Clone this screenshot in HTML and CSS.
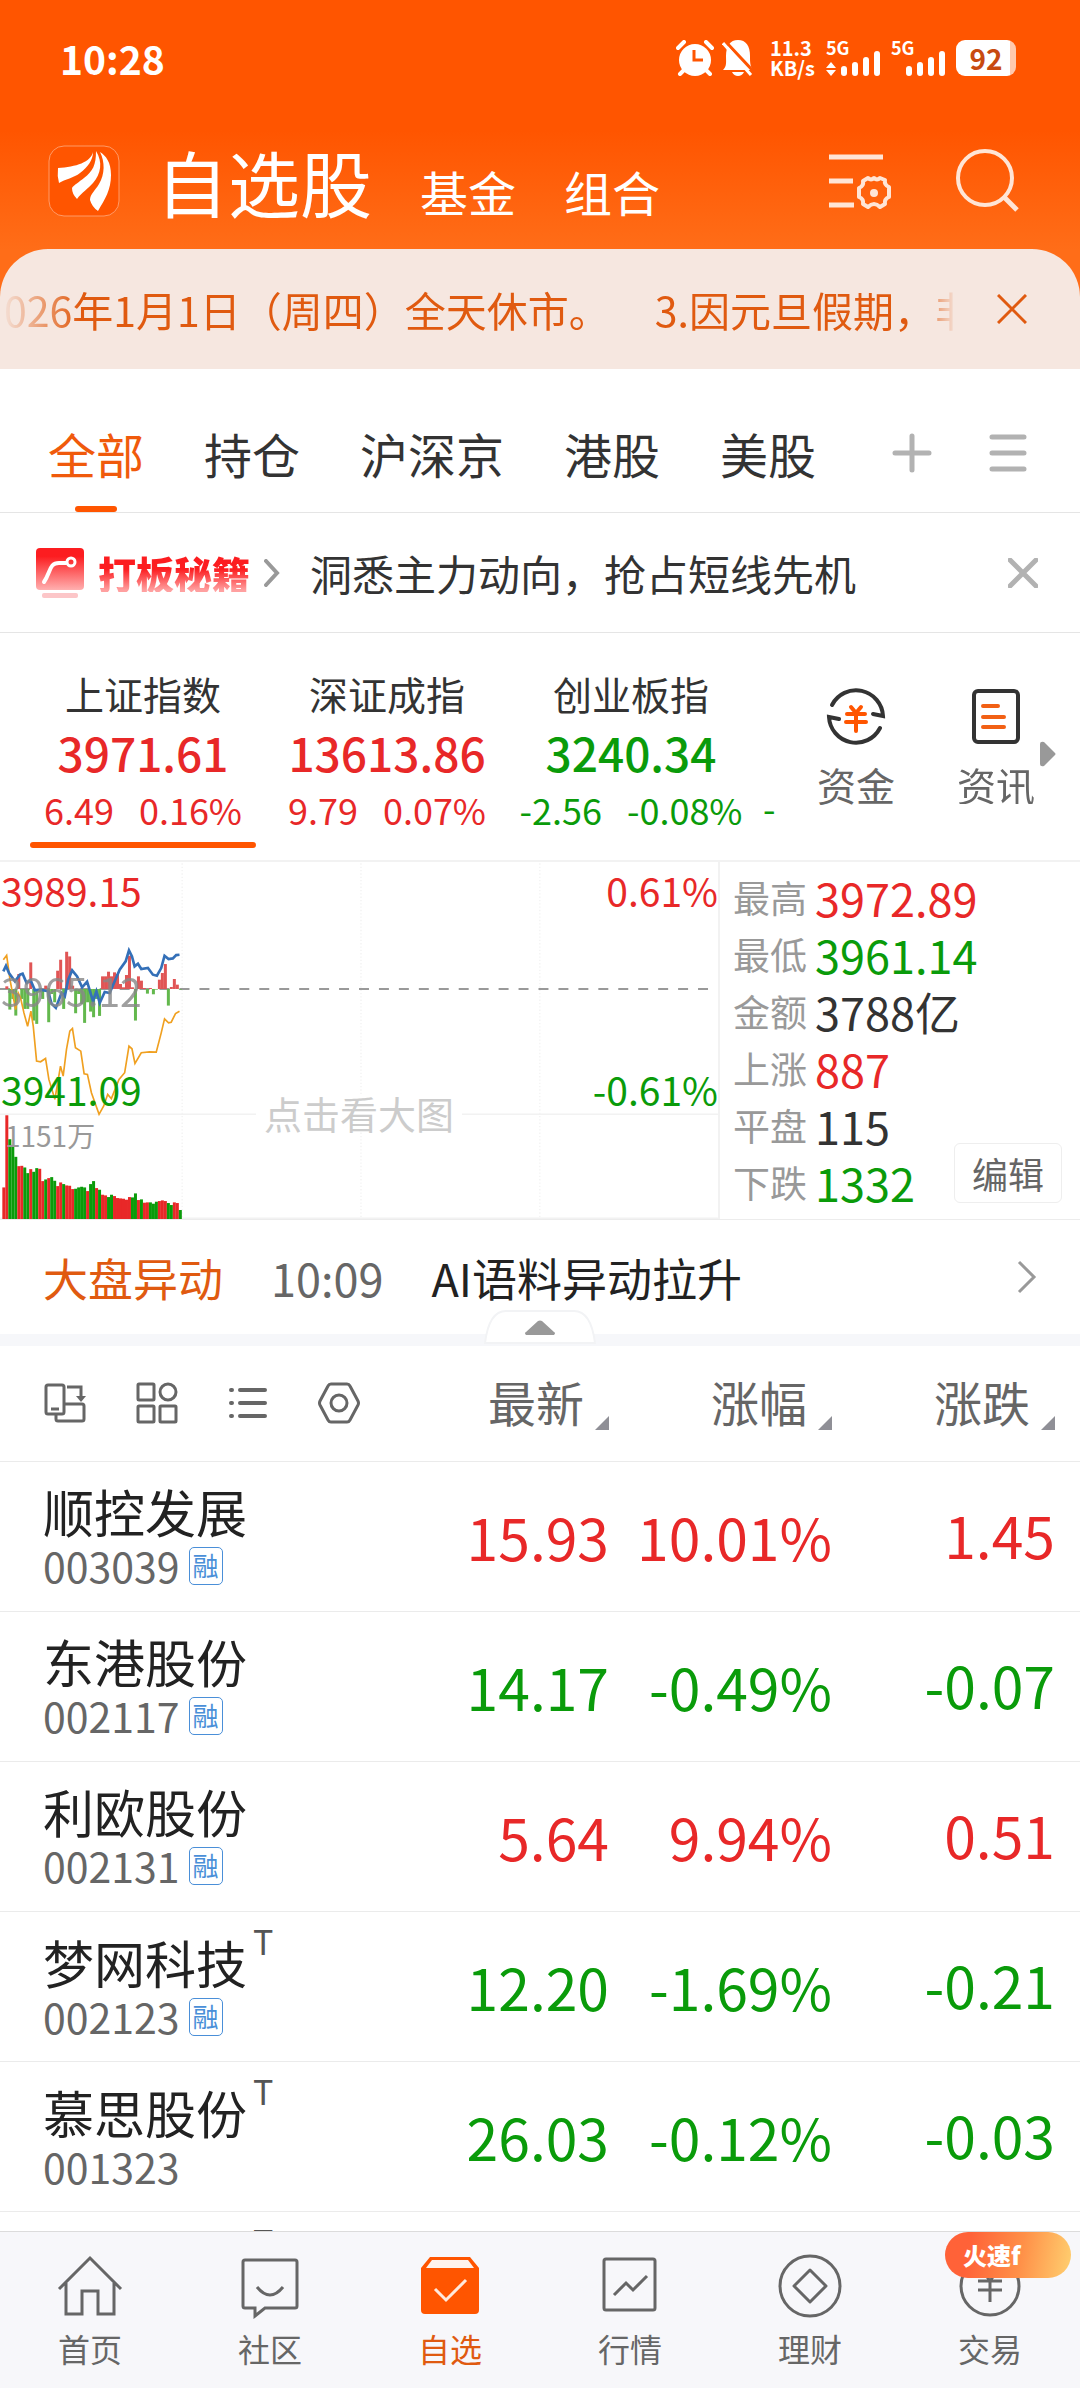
FILE: index.html
```html
<!doctype html>
<html lang="zh-CN">
  <head>
    <meta charset="UTF-8" />
    <meta name="viewport" content="width=device-width, initial-scale=1.0" />
    <title>自选股</title>
    <link rel="stylesheet" href="styles.css">
  </head>
  <body>
    <header class="app-header">
      <div class="status-bar">
        <span class="clock">10:28</span>
        <div class="status-icons">
          <svg class="alarm" width="38" height="36" viewBox="0 0 38 36">
            <circle cx="19" cy="20" r="16" fill="#fff" />
            <path d="M2 8L8 2M36 8L30 2M4 34l5-5M34 34l-5-5" stroke="#fff" stroke-width="4" stroke-linecap="round" />
            <path d="M18 10v10h9" fill="none" stroke="#f50" stroke-width="3" />
          </svg>
          <svg class="bell" width="32" height="36" viewBox="0 0 32 36">
            <path d="M1 30C5 26 4 22 4 16C4 6 8 0 16 0S28 6 28 16C28 22 28 26 31 30Z" fill="#fff" />
            <path d="M10 32h12Q20 36 16 36T10 32Z" fill="#fff" />
            <path d="M3 1L32 32" stroke="#f50" stroke-width="3" />
            <path d="M1 3L29 35" stroke="#fff" stroke-width="3" />
          </svg>
          <div class="net-speed"><span>11.3</span><span>KB/s</span></div>
          <div class="signal">
            <span>5G</span>
            <svg width="56" height="26" viewBox="0 0 56 26">
              <path d="M0 18l5-6 5 6zM0 20l5 6 5-6z" fill="#fff" />
              <path d="M18 19v4M29 15v8M40 10v13M51 4v19" stroke="#fff" stroke-width="6" stroke-linecap="round" />
            </svg>
          </div>
          <div class="signal">
            <span>5G</span>
            <svg width="56" height="26" viewBox="0 0 56 26">
              <path d="M18 19v4M29 15v8M40 10v13M51 4v19" stroke="#fff" stroke-width="6" stroke-linecap="round" />
            </svg>
          </div>
          <span class="battery">92</span>
        </div>
      </div>
      <div class="title-bar">
        <svg class="logo" width="72" height="72" viewBox="0 0 72 72">
          <rect x="1" y="1" width="70" height="70" rx="15" fill="#f50" stroke="#ff9a66" />
          <path fill="#fff" d="M45 7C43 17 28 22 10 23Q9 31 11 38C17 34 26 33 32 28C40 22 45 15 45 7ZM48 6C48 20 45 26 36 33C31 37 26 40 24 43Q24 49 29 54C34 47 40 44 45 38C53 29 55 17 48 6ZM52 7C57 17 57 29 51 39C47 46 42 49 42 55Q44 62 50 66C57 54 63 45 63 30C63 17 58 11 52 7Z" />
        </svg>
        <nav class="title-nav">
          <a class="current" href="#">自选股</a>
          <a href="#">基金</a>
          <a href="#">组合</a>
        </nav>
        <button class="icon-button" aria-label="设置">
          <svg width="64" height="62" viewBox="0 0 64 62">
            <g fill="none" stroke="#ffe5d6" stroke-width="5">
              <path d="M0 7h54M0 31h24M0 55h25" />
              <path stroke-width="4" stroke-linejoin="round" d="M45 29Q48 32 51 29L56 31Q55 36 60 38V48Q55 50 56 55L51 58Q48 55 45 55Q42 55 39 58L34 55Q35 50 30 48V39Q35 37 34 32L39 29Q42 32 45 29Z" transform="translate(0 -1)" />
            </g>
            <circle cx="45" cy="43" r="4" fill="#ffe5d6" />
          </svg>
        </button>
        <button class="icon-button" aria-label="搜索">
          <svg width="64" height="64" viewBox="0 0 64 64">
            <g fill="none" stroke="#ffe5d6" stroke-width="4">
              <circle cx="29" cy="29" r="27" />
              <path d="M48 48L61 61" stroke-width="5" />
            </g>
          </svg>
        </button>
      </div>
    </header>

    <section class="notice">
      <div class="notice-text"><span>026年1月1日（周四）全天休市。</span><span>3.因元旦假期，非</span></div>
      <button class="icon-button" aria-label="关闭公告">
        <svg width="30" height="30" viewBox="0 0 30 30">
          <path d="M1 1L29 29M29 1L1 29" stroke="#e05a10" stroke-width="3" />
        </svg>
      </button>
    </section>

    <nav class="tabs">
      <a class="active" href="#">全部</a>
      <a href="#">持仓</a>
      <a href="#">沪深京</a>
      <a href="#">港股</a>
      <a href="#">美股</a>
      <div class="tab-actions">
        <button class="icon-button" aria-label="添加">
          <svg width="40" height="40" viewBox="0 0 40 40">
            <path d="M3 20h34M20 3v34" stroke="#b2b2b2" stroke-width="5" stroke-linecap="round" />
          </svg>
        </button>
        <button class="icon-button" aria-label="分组">
          <svg width="40" height="40" viewBox="0 0 40 40">
            <path d="M4 4h32M4 20h32M4 36h32" stroke="#b2b2b2" stroke-width="5" stroke-linecap="round" />
          </svg>
        </button>
      </div>
    </nav>

    <section class="promo">
      <svg width="48" height="50" viewBox="0 0 48 50">
        <defs>
          <linearGradient id="promoFill" x2="0" y2="1">
            <stop offset="0.2" stop-color="#fc1d20" />
            <stop offset="1" stop-color="#ffb0b0" />
          </linearGradient>
        </defs>
        <rect width="48" height="42" rx="4" fill="url(#promoFill)" />
        <rect x="6" y="45" width="36" height="5" rx="2" fill="#fcc6c8" />
        <path d="M8 34C15 24 13 15 23 15H30" fill="none" stroke="#fff" stroke-width="4" stroke-linecap="round" />
        <circle cx="35" cy="14" r="4" fill="none" stroke="#fff" stroke-width="3" />
      </svg>
      <strong>打板秘籍</strong>
      <svg width="16" height="28" viewBox="0 0 16 28">
        <path d="M2 2l11 12L2 26" fill="none" stroke="#999" stroke-width="4" stroke-linecap="round" />
      </svg>
      <a href="#">洞悉主力动向，抢占短线先机</a>
      <button class="icon-button" aria-label="关闭">
        <svg width="30" height="30" viewBox="0 0 30 30">
          <path d="M2 2L28 28M28 2L2 28" stroke="#b2b2b2" stroke-width="5" stroke-linecap="round" />
        </svg>
      </button>
    </section>

    <section class="indices">
      <div class="index-list">
        <div class="index-item up selected">
          <span class="index-name">上证指数</span>
          <span class="index-value">3971.61</span>
          <span class="index-change"><span>6.49</span><span>0.16%</span></span>
        </div>
        <div class="index-item up">
          <span class="index-name">深证成指</span>
          <span class="index-value">13613.86</span>
          <span class="index-change"><span>9.79</span><span>0.07%</span></span>
        </div>
        <div class="index-item down">
          <span class="index-name">创业板指</span>
          <span class="index-value">3240.34</span>
          <span class="index-change"><span>-2.56</span><span>-0.08%</span></span>
        </div>
        <div class="index-item down next">
          <span class="index-change">-</span>
        </div>
      </div>
      <div class="index-tools">
        <a href="#">
          <svg width="60" height="60" viewBox="0 0 60 60">
            <g fill="none" stroke="#333" stroke-width="4" stroke-linecap="round">
              <path d="M6 19A27 27 0 0 1 57 30L47 28" />
              <path d="M54 42A27 27 0 0 1 3 31L13 33" />
            </g>
            <path d="M25 21l5 6 5-6M21 28h18M20 36h20M30 27v18" fill="none" stroke="#f50" stroke-width="4" stroke-linecap="round" />
          </svg>
          资金
        </a>
        <a href="#">
          <svg width="60" height="60" viewBox="0 0 60 60">
            <rect x="8" y="5" width="44" height="51" rx="4" fill="none" stroke="#333" stroke-width="4" />
            <path d="M17 20h15M17 31h21M17 41h21" stroke="#f26014" stroke-width="4" stroke-linecap="round" />
          </svg>
          资讯
        </a>
      </div>
      <svg class="more-arrow" width="16" height="26" viewBox="0 0 16 26">
        <path d="M0 3Q0 0 4 1L15 12Q16 13 15 14L4 25Q0 26 0 23Z" fill="#999" />
      </svg>
    </section>

    <section class="market">
      <div class="chart">
        <svg id="chartPlot" viewBox="0 6 2160 1074">
          <g stroke="#f2f2f2" stroke-width="4">
            <path d="M548 10V1080M1086 10V1080M1624 10V1080" stroke-dasharray="4 6" />
            <path d="M0 765H2160M0 1078H2160" stroke-width="5" />
          </g>
          <path d="M0 388H2140" stroke="#999" stroke-width="6" stroke-dasharray="30 30" />
          <g id="bars"></g>
          <polyline fill="none" stroke="#f0a020" stroke-width="5" points="10,300 20,287 30,360 47,450 55,400 62,415 72,460 83,500 93,455 100,500 110,605 122,607 137,597 147,660 165,720 182,620 190,650 200,570 210,515 218,507 227,565 243,575 253,643 263,645 275,700 298,765 312,740 324,705 335,718 358,660 375,640 388,560 397,568 406,612 425,580 450,577 470,578 485,520 495,478 507,490 515,488 528,462 540,455" />
          <polyline fill="none" stroke="#3470b8" stroke-width="8" points="10,335 18,318 27,340 45,365 60,345 68,342 80,370 92,362 105,392 120,390 145,395 155,432 168,445 185,400 195,410 205,360 217,332 232,350 247,383 262,366 280,425 290,395 300,430 315,397 330,400 345,365 360,330 378,305 388,272 397,290 405,320 415,312 425,328 445,325 460,345 472,348 485,325 495,288 507,298 520,296 530,286 540,285" />
        </svg>
        <span class="chart-label high up">3989.15</span>
        <span class="chart-label high right up">0.61%</span>
        <span class="chart-label middle">3965.12</span>
        <span class="chart-label low down">3941.09</span>
        <span class="chart-label low right down">-0.61%</span>
        <span class="chart-label volume">1151万</span>
        <span class="chart-hint">点击看大图</span>
      </div>
      <div class="market-stats">
        <dl>
          <div><dt>最高</dt><dd class="up">3972.89</dd></div>
          <div><dt>最低</dt><dd class="down">3961.14</dd></div>
          <div><dt>金额</dt><dd>3788亿</dd></div>
          <div><dt>上涨</dt><dd class="up">887</dd></div>
          <div><dt>平盘</dt><dd>115</dd></div>
          <div><dt>下跌</dt><dd class="down">1332</dd></div>
        </dl>
        <button class="edit-button">编辑</button>
      </div>
    </section>

    <section class="movement">
      <strong>大盘异动</strong>
      <time>10:09</time>
      <a href="#">AI语料异动拉升</a>
      <svg width="20" height="34" viewBox="0 0 20 34">
        <path d="M2 2l15 15L2 32" fill="none" stroke="#999" stroke-width="3" />
      </svg>
      <button class="collapse" aria-label="收起">
        <svg width="112" height="34" viewBox="0 0 112 34">
          <path d="M1 33Q5 1 22 1H90Q107 1 111 33Z" fill="#fff" stroke="#f2f3f5" stroke-width="2" />
          <path d="M42 25Q40 23 42 22L54 11Q56 10 58 11L70 22Q72 23 70 25Z" fill="#999" />
        </svg>
      </button>
    </section>

    <main class="stock-list">
      <table>
        <thead>
          <tr>
            <th>
              <div class="view-tools">
                <button class="icon-button" aria-label="横屏">
                  <svg width="44" height="42" viewBox="0 0 44 42">
                    <g fill="none" stroke="#666" stroke-width="3">
                      <rect x="3" y="3" width="18" height="29" rx="2" />
                      <path d="M13 33V37Q13 39 15 39H39Q41 39 41 37V24Q41 22 39 22H21M8 27h8M24 5H38V15" />
                    </g>
                    <path d="M33 14h10l-5 6z" fill="#666" />
                  </svg>
                </button>
                <button class="icon-button" aria-label="宫格">
                  <svg width="42" height="42" viewBox="0 0 42 42">
                    <g fill="none" stroke="#666" stroke-width="3">
                      <rect x="2" y="2" width="16" height="16" rx="1" />
                      <circle cx="32" cy="10" r="8" />
                      <rect x="2" y="24" width="16" height="16" rx="1" />
                      <rect x="24" y="24" width="16" height="16" rx="1" />
                    </g>
                  </svg>
                </button>
                <button class="icon-button" aria-label="列表">
                  <svg width="42" height="42" viewBox="0 0 42 42">
                    <path d="M4 8h1M4 21h1M4 34h1M13 8h25M13 21h25M13 34h25" stroke="#666" stroke-width="4" stroke-linecap="round" />
                  </svg>
                </button>
                <button class="icon-button" aria-label="列表设置">
                  <svg width="42" height="42" viewBox="0 0 42 42">
                    <g fill="none" stroke="#666" stroke-width="3">
                      <path d="M13 2H29Q31 2 32 4L40 19Q41 21 40 23L32 38Q31 40 29 40H13Q11 40 10 38L2 23Q1 21 2 19L10 4Q11 2 13 2Z" />
                      <circle cx="21" cy="21" r="8" />
                    </g>
                  </svg>
                </button>
              </div>
            </th>
            <th class="col-price"><button class="sort">最新</button></th>
            <th class="col-rate"><button class="sort">涨幅</button></th>
            <th class="col-change"><button class="sort">涨跌</button></th>
          </tr>
        </thead>
        <tbody>
          <tr class="up">
            <td><div class="stock-name">顺控发展</div><div class="stock-code">003039<span class="margin-tag">融</span></div></td>
            <td>15.93</td>
            <td>10.01%</td>
            <td>1.45</td>
          </tr>
          <tr class="down">
            <td><div class="stock-name">东港股份</div><div class="stock-code">002117<span class="margin-tag">融</span></div></td>
            <td>14.17</td>
            <td>-0.49%</td>
            <td>-0.07</td>
          </tr>
          <tr class="up">
            <td><div class="stock-name">利欧股份</div><div class="stock-code">002131<span class="margin-tag">融</span></div></td>
            <td>5.64</td>
            <td>9.94%</td>
            <td>0.51</td>
          </tr>
          <tr class="down">
            <td><div class="stock-name">梦网科技<sup>T</sup></div><div class="stock-code">002123<span class="margin-tag">融</span></div></td>
            <td>12.20</td>
            <td>-1.69%</td>
            <td>-0.21</td>
          </tr>
          <tr class="down">
            <td><div class="stock-name">慕思股份<sup>T</sup></div><div class="stock-code">001323</div></td>
            <td>26.03</td>
            <td>-0.12%</td>
            <td>-0.03</td>
          </tr>
          <tr>
            <td><div class="stock-name">　　　　<sup>T</sup></div><div class="stock-code">&nbsp;</div></td>
            <td></td>
            <td></td>
            <td></td>
          </tr>
        </tbody>
      </table>
    </main>

    <nav class="bottom-nav">
      <a href="#">
        <svg width="66" height="66" viewBox="0 0 66 66">
          <path d="M2 36L33 5L64 36M9 30V61H25V38H41V61H57V30" fill="none" stroke="#666" stroke-width="3" />
        </svg>
        首页
      </a>
      <a href="#">
        <svg width="66" height="66" viewBox="0 0 66 66">
          <path d="M8 7H58Q60 7 60 9V53Q60 55 58 55H28L18 63V55H8Q6 55 6 53V9Q6 7 8 7Z" fill="none" stroke="#666" stroke-width="3" />
          <path d="M20 34Q33 50 46 34" fill="none" stroke="#666" stroke-width="3" />
        </svg>
        社区
      </a>
      <a class="active" href="#">
        <svg width="66" height="66" viewBox="0 0 66 66">
          <path d="M4 15L13 4H53L62 15V57Q62 61 58 61H8Q4 61 4 57Z" fill="#f50" />
          <path d="M15 7H51L57 15H9Z" fill="#fff3ec" />
          <path d="M18 36L29 47L49 27" fill="none" stroke="#ffe9dc" stroke-width="3" />
        </svg>
        自选
      </a>
      <a href="#">
        <svg width="66" height="66" viewBox="0 0 66 66">
          <rect x="7" y="6" width="51" height="51" rx="2" fill="none" stroke="#666" stroke-width="3" />
          <path d="M17 42L29 30L36 37L50 23" fill="none" stroke="#666" stroke-width="3" />
        </svg>
        行情
      </a>
      <a href="#">
        <svg width="66" height="66" viewBox="0 0 66 66">
          <g fill="none" stroke="#666" stroke-width="3" stroke-linejoin="round">
            <circle cx="33" cy="33" r="30" />
            <path d="M33 17L49 33L33 49L17 33Z" />
          </g>
        </svg>
        理财
      </a>
      <a href="#">
        <svg width="66" height="66" viewBox="0 0 66 66">
          <g fill="none" stroke="#666" stroke-width="3">
            <circle cx="33" cy="33" r="29" />
            <path d="M23 14L33 28L43 14M21 28H45M21 37H45M33 28V49" />
          </g>
        </svg>
        交易
        <span class="nav-badge">火速f</span>
      </a>
    </nav>

    <script>
      const volumes = [95, 312, 240, 223, 187, 159, 160, 155, 138, 150, 142, 153, 151, 114, 119, 123, 126, 115, 99, 110, 105, 101, 100, 90, 91, 95, 97, 95, 84, 105, 114, 93, 88, 73, 71, 66, 73, 69, 63, 62, 61, 58, 66, 65, 77, 57, 59, 49, 50, 50, 46, 52, 54, 56, 54, 48, 42, 50, 48, 27];
      const volumeColors = "RRGGGRRGGRGGRRGRGGRRGRRRGGGGRGGRGRRGGRRRRRRGGRGRRGGGRRRGGRRG";
      const momentum = [0, 8, -62, -30, -80, 45, -30, -60, -60, 80, -95, -105, -10, -30, 10, -100, -15, -40, 55, 88, -60, 112, 98, 10, -73, -15, -45, -102, -40, -68, -85, -30, -81, 38, 38, 52, 38, 50, 45, 15, 5, 42, 100, 5, -95, 38, 25, 3, -14, 3, -16, -2, 28, 48, 75, -50, 6, 30, 13, -2];

      let html = "";
      momentum.forEach((value, i) => {
        const y = value > 0 ? 388 - value : 388;
        const fill = value > 0 ? "#e05555" : "#63b84d";
        html += `<rect x="${7 + i * 9}" y="${y}" width="9" height="${Math.abs(value)}" fill="${fill}" />`;
      });
      volumes.forEach((value, i) => {
        const fill = volumeColors[i] === "R" ? "#e82828" : "#0a9b0a";
        html += `<rect x="${7 + i * 9}" y="${1080 - value}" width="9" height="${value}" fill="${fill}" />`;
      });
      document.getElementById("bars").innerHTML = html;
    </script>
  </body>
</html>
```

FILE: styles.css
```css
* {
  box-sizing: border-box;
}

body {
  display: flex;
  flex-direction: column;
  height: 100vh;
  margin: 0;
  background: #fff;
  color: #333;
  font-family: "Noto Sans CJK SC", sans-serif;
  line-height: 1;
}

a {
  color: inherit;
  text-decoration: none;
}

button {
  padding: 0;
  border: none;
  background: none;
  color: inherit;
  font: inherit;
  cursor: pointer;
}

svg {
  display: block;
  flex-shrink: 0;
}

.up {
  color: #e82828;
}

.down {
  color: #0a9b0a;
}

/* Header */
.app-header {
  padding-bottom: 48px;
  margin-bottom: -48px;
  background: linear-gradient(#f50 130px, #ff6d18 250px);
  color: #fff;
}

.status-bar {
  display: flex;
  justify-content: space-between;
  align-items: center;
  height: 116px;
  padding: 0 64px 0 60px;
}

.clock {
  font-size: 39px;
  font-weight: 700;
}

.status-icons {
  display: flex;
  align-items: center;
}

.alarm {
  margin-right: 8px;
}

.bell {
  margin-right: 16px;
}

.net-speed {
  display: flex;
  flex-direction: column;
  width: 56px;
  font-size: 20px;
  font-weight: 700;
}

.signal {
  position: relative;
  margin-right: 9px;
  padding-top: 10px;
}

.signal span {
  position: absolute;
  top: -2px;
  left: 0;
  font-size: 18px;
  font-weight: 700;
}

.battery {
  width: 60px;
  border-radius: 9px;
  background: linear-gradient(90deg, #fff 54px, #ffc9ae 54px);
  color: #c84a10;
  font-size: 28px;
  font-weight: 700;
  line-height: 36px;
  text-align: center;
}

.title-bar {
  display: flex;
  align-items: center;
  height: 133px;
  padding: 0 60px 4px 48px;
}

.title-nav {
  display: flex;
  flex: 1;
  gap: 48px;
  align-items: baseline;
  padding-left: 36px;
  font-size: 48px;
}

.title-nav .current {
  font-size: 72px;
}

.title-bar .icon-button + .icon-button {
  margin-left: 63px;
}

/* Notice */
.notice {
  display: flex;
  align-items: center;
  height: 120px;
  padding-right: 53px;
  border-radius: 48px 48px 0 0;
  background: #f6e7e0;
  color: #e05a10;
  font-size: 41px;
}

.notice-text {
  display: flex;
  flex: 1;
  gap: 45px;
  overflow: hidden;
  margin-right: 40px;
  padding-left: 4px;
  line-height: 60px;
  white-space: nowrap;
  mask-image: linear-gradient(90deg, transparent, #000 80px, #000 calc(100% - 40px), transparent);
}

/* Group tabs */
.tabs {
  display: flex;
  gap: 60px;
  height: 144px;
  padding: 0 52px 0 48px;
  border-bottom: 1px solid #e5e5e5;
  font-size: 48px;
  line-height: 168px;
}

.tabs .active {
  position: relative;
  color: #f05a0c;
}

.tabs .active::after {
  position: absolute;
  bottom: 0;
  left: 27px;
  width: 42px;
  height: 6px;
  border-radius: 3px;
  background: #f50;
  content: "";
}

.tab-actions {
  display: flex;
  flex: 1;
  gap: 56px;
  justify-content: flex-end;
  align-items: center;
  padding-top: 24px;
}

/* Promo */
.promo {
  display: flex;
  align-items: center;
  height: 120px;
  padding: 0 42px 0 36px;
  border-bottom: 1px solid #e5e5e5;
  font-size: 42px;
}

.promo strong {
  margin: 0 14px;
  background: linear-gradient(#fc1d20 40%, #ffa0a0 95%);
  background-clip: text;
  color: transparent;
  font-size: 38px;
  font-weight: 900;
}

.promo a {
  flex: 1;
  margin-left: 30px;
}

/* Indices */
.indices {
  display: flex;
  align-items: center;
  height: 229px;
  border-bottom: 2px solid #f2f2f2;
  font-size: 39px;
}

.index-list {
  display: flex;
  flex: 1;
  align-self: stretch;
  overflow: hidden;
  padding-left: 21px;
}

.index-item {
  position: relative;
  display: flex;
  flex: none;
  flex-direction: column;
  gap: 16px;
  align-items: center;
  width: 244px;
  padding-top: 41px;
}

.index-item.selected::after {
  position: absolute;
  right: 9px;
  bottom: 12px;
  left: 9px;
  height: 6px;
  border-radius: 3px;
  background: #f50;
  content: "";
}

.index-item.next {
  align-items: flex-start;
  justify-content: flex-end;
  padding: 0 10px 35px;
}

.index-name {
  color: #333;
}

.index-value {
  font-size: 46px;
  font-weight: 500;
}

.index-change {
  display: flex;
  gap: 25px;
  font-size: 36px;
}

.index-tools {
  display: flex;
  padding-bottom: 4px;
  color: #666;
}

.index-tools a {
  display: flex;
  flex-direction: column;
  gap: 19px;
  align-items: center;
  width: 140px;
}

.index-tools a:last-child {
  mask-image: linear-gradient(90deg, #000 75%, transparent 110%);
}

.more-arrow {
  margin: 14px 24px 0 -26px;
}

/* Market overview */
.market {
  display: grid;
  grid-template-columns: 2fr 1fr;
  border-bottom: 1px solid #ececec;
}

.chart {
  position: relative;
  border-right: 2px solid #f2f2f2;
}

.chart svg {
  width: 100%;
}

.chart-label {
  position: absolute;
  left: 1px;
  font-size: 39px;
}

.chart-label.right {
  right: 0;
  left: auto;
}

.chart-label.high {
  top: 9px;
}

.chart-label.middle {
  top: 109px;
  color: #888;
  opacity: 0.8;
}

.chart-label.low {
  top: 208px;
}

.chart-label.volume {
  top: 259px;
  left: 5px;
  color: #999;
  font-size: 28px;
}

.chart-hint {
  position: absolute;
  top: 232px;
  left: 50%;
  padding: 0 8px;
  background: #fff;
  color: #ccc;
  font-size: 38px;
  white-space: nowrap;
  transform: translateX(-50%);
}

.market-stats {
  position: relative;
  padding: 7px 13px;
}

.market-stats dl {
  margin: 0;
}

.market-stats dl div {
  display: flex;
  gap: 8px;
  align-items: center;
  height: 57px;
}

.market-stats dt {
  color: #999;
  font-size: 37px;
}

.market-stats dd {
  margin: 0;
  font-size: 45px;
}

.edit-button {
  position: absolute;
  right: 18px;
  bottom: 16px;
  width: 108px;
  height: 60px;
  border: 1px solid #eee;
  border-radius: 6px;
  background: #fff;
  color: #666;
  font-size: 36px;
}

/* Market movement */
.movement {
  position: relative;
  display: flex;
  align-items: center;
  height: 126px;
  padding: 0 43px;
  border-bottom: 12px solid #f6f7fa;
  font-size: 45px;
}

.movement strong {
  color: #e05a10;
  font-weight: 400;
}

.movement time {
  margin: 0 48px;
  color: #666;
}

.movement a {
  flex: 1;
  color: #222;
}

.collapse {
  position: absolute;
  bottom: -10px;
  left: calc(50% - 56px);
}

/* Stock list */
.stock-list {
  flex: 1;
  min-height: 0;
  overflow-y: auto;
  scrollbar-width: none;
}

table {
  width: 100%;
  border-collapse: collapse;
  table-layout: fixed;
}

th,
td {
  padding: 0;
  border-bottom: 1px solid #ebebeb;
  font-weight: 400;
  text-align: right;
}

th {
  height: 115px;
  color: #666;
  font-size: 48px;
}

td {
  height: 150px;
  font-size: 57px;
}

th:first-child,
td:first-child {
  padding-left: 43px;
  text-align: left;
}

.col-price,
.col-rate {
  width: 223px;
}

.col-change {
  width: 248px;
}

th:last-child {
  padding-right: 25px;
}

td:last-child {
  padding: 0 25px 4px 0;
}

.view-tools {
  display: flex;
  gap: 49px;
}

.sort::after {
  display: inline-block;
  margin-left: 11px;
  border: 7px solid transparent;
  border-right-color: #8f8f96;
  border-bottom-color: #8f8f96;
  vertical-align: -8px;
  content: "";
}

.stock-name {
  margin-bottom: 8px;
  color: #222;
  font-size: 51px;
}

.stock-name sup {
  display: inline-block;
  margin-left: 6px;
  color: #555;
  font-size: 34px;
  line-height: 12px;
  vertical-align: 29px;
}

.stock-code {
  display: flex;
  gap: 9px;
  align-items: center;
  color: #666;
  font-size: 41px;
}

.margin-tag {
  width: 34px;
  height: 38px;
  border: 1px solid #4a8fd8;
  border-radius: 5px;
  color: #4a8fd8;
  font-size: 26px;
  line-height: 34px;
  text-align: center;
}

/* Bottom navigation */
.bottom-nav {
  display: flex;
  flex-shrink: 0;
  height: 157px;
  padding-top: 21px;
  border-top: 1px solid #dcdcdc;
  background: #f7f7fa;
  color: #666;
  font-size: 32px;
}

.bottom-nav a {
  position: relative;
  display: flex;
  flex: 1;
  flex-direction: column;
  gap: 13px;
  align-items: center;
}

.bottom-nav .active {
  color: #e05a10;
}

.nav-badge {
  position: absolute;
  top: -21px;
  right: 9px;
  width: 126px;
  padding-left: 18px;
  border-radius: 23px;
  background: linear-gradient(100deg, #ff6238 20%, #ff9048 60%, #ffd070);
  color: #fff;
  font-size: 24px;
  font-weight: 900;
  line-height: 46px;
}
```
